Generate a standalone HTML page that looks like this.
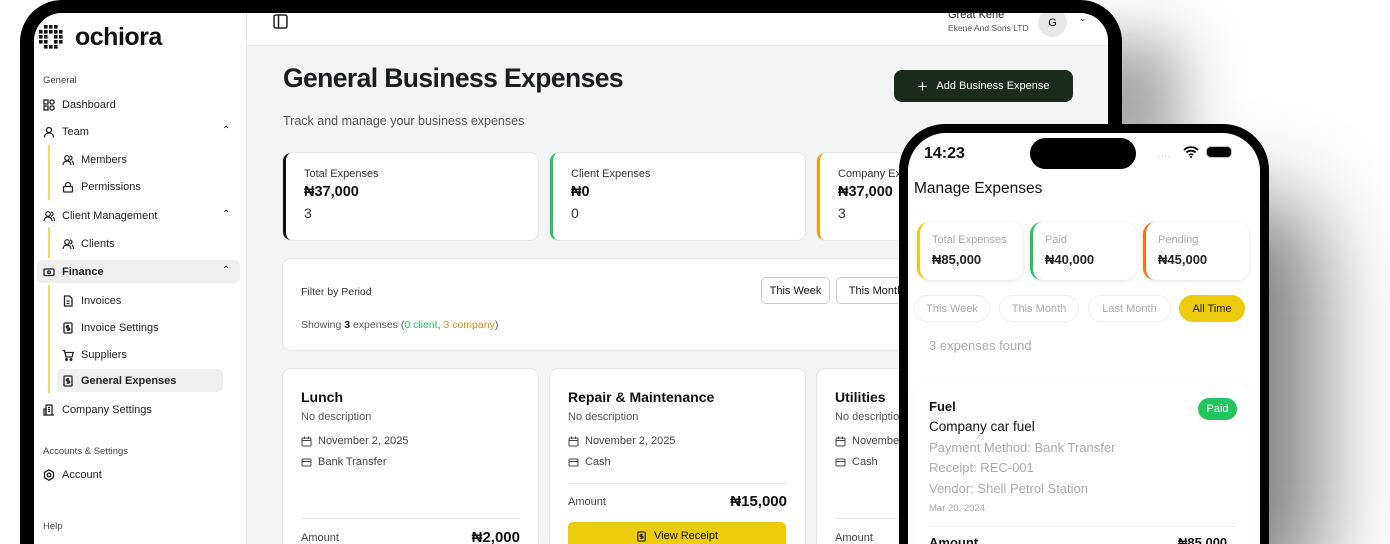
<!DOCTYPE html>
<html style="width:1390px;height:544px;overflow:hidden"><head><meta charset="utf-8"><style>
*{box-sizing:border-box;margin:0;padding:0}
body{width:1390px;height:544px;overflow:hidden;background:#fff;font-family:"Liberation Sans",sans-serif;position:relative;color:#111}
.abs{position:absolute}
.tablet{left:20px;top:0;width:1102px;height:544px;background:#000;border-radius:42px 42px 0 0}
.screen{left:34px;top:13px;width:1074px;height:531px;background:#f3f4f6;border-radius:28px 28px 0 0;overflow:hidden}
.side{left:0;top:0;width:213px;height:531px;background:#fff;border-right:1px solid #e5e5e5}
.hdr{left:213px;top:0;width:861px;height:33px;background:#fff;border-bottom:1px solid #e8e8e8}
.sec{font-size:9.5px;color:#444}
.mi{font-size:11px;color:#222;display:flex;align-items:center;gap:7px;height:22px}
.mi svg{width:12px;height:12px;flex:none}
.card{background:#fff;border-radius:8px;box-shadow:0 0 0 1px #e6e6e6}
.stat{width:255px;height:87px;border-left:3px solid}
.stat .l{position:absolute;left:18px;top:15px;font-size:11px;color:#333}
.stat .v{position:absolute;left:18px;top:31px;font-size:14.5px;font-weight:bold}
.stat .c{position:absolute;left:18px;top:52px;font-size:14px;color:#333}
.ec{width:255px;height:180px}
.ec .t{position:absolute;left:18px;top:20px;font-size:14px;font-weight:bold}
.ec .d{position:absolute;left:18px;top:42px;font-size:11px;color:#555}
.ec .r{position:absolute;left:18px;font-size:11px;color:#444;display:flex;gap:6px;align-items:center}
.ec .hr{position:absolute;left:18px;right:18px;height:1px;background:#e8e8e8}
.phone{left:899px;top:124px;width:370px;height:420px;background:#000;border-radius:46px 46px 0 0}
.pscr{left:9px;top:9px;width:352px;height:411px;background:#fff;border-radius:38px 38px 0 0;overflow:hidden}
.mc{width:106px;height:58px;background:#fff;border-radius:12px;box-shadow:0 1px 4px rgba(0,0,0,.1);border-left:3px solid}
.mc .l{position:absolute;left:12px;top:12px;font-size:11px;color:#aaa}
.mc .v{position:absolute;left:12px;top:30px;font-size:13px;font-weight:bold;color:#222}
.pill{height:27px;border:1px solid #eee;border-radius:14px;font-size:11px;color:#aaa;display:flex;align-items:center;justify-content:center}
.g{font-size:13px;color:#aaa;left:21px}
</style></head><body>
<div class="abs" style="left:1060px;top:40px;width:120px;height:120px;background:rgba(0,0,0,.35);filter:blur(30px)"></div>
<div class="abs" style="left:1080px;top:200px;width:240px;height:400px;background:rgba(0,0,0,.5);filter:blur(45px);border-radius:60px"></div>
<div class="abs tablet"></div>
<div class="abs screen">
 <div class="abs side">
  <svg class="abs" style="left:3px;top:12px" width="28" height="28" viewBox="0 0 28 28" fill="#111">
   <g>
   <rect x="7" y="0" width="3.6" height="3.6"/><rect x="12" y="0" width="3.6" height="3.6"/><rect x="17" y="0" width="3.6" height="3.6"/>
   <rect x="2" y="5" width="3.6" height="3.6"/><rect x="7" y="5" width="3.6" height="3.6"/><rect x="12" y="5" width="3.6" height="3.6"/><rect x="17" y="5" width="3.6" height="3.6"/><rect x="22" y="5" width="3.6" height="3.6"/>
   <rect x="2" y="10" width="3.6" height="3.6"/><rect x="7" y="10" width="3.6" height="3.6"/><rect x="17" y="10" width="3.6" height="3.6"/><rect x="22" y="10" width="3.6" height="3.6"/>
   <rect x="2" y="15" width="3.6" height="3.6"/><rect x="7" y="15" width="3.6" height="3.6"/><rect x="17" y="15" width="3.6" height="3.6"/><rect x="22" y="15" width="3.6" height="3.6"/>
   <rect x="7" y="20" width="3.6" height="3.6"/><rect x="12" y="20" width="3.6" height="3.6"/><rect x="17" y="20" width="3.6" height="3.6"/>
   </g></svg>
  <div class="abs" style="left:41px;top:10px;font-size:25px;font-weight:bold;letter-spacing:-0.5px">ochiora</div>
  <div class="abs sec" style="left:9px;top:62px">General</div>
  <div class="abs mi" style="left:9px;top:81px"><svg viewBox="0 0 12 12" fill="none" stroke="#222" stroke-width="1.3"><rect x="1" y="1" width="4" height="4"/><rect x="7" y="1" width="4" height="4" rx="1.5"/><rect x="1" y="7" width="4" height="4"/><rect x="7" y="7" width="4" height="4" rx="1.5"/></svg>Dashboard</div>
  <div class="abs mi" style="left:9px;top:108px"><svg viewBox="0 0 12 12" fill="none" stroke="#222" stroke-width="1.3"><circle cx="6" cy="4" r="2.5"/><path d="M1.5 11.5c0-3 2-4.5 4.5-4.5s4.5 1.5 4.5 4.5"/></svg>Team</div>
  <div class="abs" style="left:188px;top:112px;font-size:10px">&#8963;</div>
  <div class="abs" style="left:14px;top:132px;width:2px;height:55px;background:#f0d96a"></div>
  <div class="abs mi" style="left:28px;top:136px"><svg viewBox="0 0 12 12" fill="none" stroke="#222" stroke-width="1.2"><circle cx="5" cy="4" r="2.3"/><path d="M1 11c0-2.5 1.8-4 4-4s4 1.5 4 4M8 2a2 2 0 010 4M10 7c1 .6 1.5 2 1.5 4"/></svg>Members</div>
  <div class="abs mi" style="left:28px;top:163px"><svg viewBox="0 0 12 12" fill="none" stroke="#222" stroke-width="1.3"><rect x="1.5" y="5.5" width="9" height="5.5" rx="1"/><path d="M3.5 5.5V4a2.5 2.5 0 015 0v1.5"/></svg>Permissions</div>
  <div class="abs mi" style="left:9px;top:192px"><svg viewBox="0 0 12 12" fill="none" stroke="#222" stroke-width="1.2"><circle cx="5" cy="4" r="2.3"/><path d="M1 11c0-2.5 1.8-4 4-4s4 1.5 4 4M8 2a2 2 0 010 4M10 7c1 .6 1.5 2 1.5 4"/></svg>Client Management</div>
  <div class="abs" style="left:188px;top:196px;font-size:10px">&#8963;</div>
  <div class="abs" style="left:14px;top:214px;width:2px;height:31px;background:#f0d96a"></div>
  <div class="abs mi" style="left:28px;top:220px"><svg viewBox="0 0 12 12" fill="none" stroke="#222" stroke-width="1.2"><circle cx="5" cy="4" r="2.3"/><path d="M1 11c0-2.5 1.8-4 4-4s4 1.5 4 4M8 2a2 2 0 010 4M10 7c1 .6 1.5 2 1.5 4"/></svg>Clients</div>
  <div class="abs" style="left:3px;top:247px;width:203px;height:23px;background:#efefef;border-radius:5px"></div>
  <div class="abs mi" style="left:9px;top:248px;font-weight:bold"><svg viewBox="0 0 12 12" fill="none" stroke="#222" stroke-width="1.3"><rect x="1" y="3" width="10" height="6.5" rx="1"/><circle cx="6" cy="6.2" r="1.3"/></svg>Finance</div>
  <div class="abs" style="left:188px;top:252px;font-size:10px">&#8963;</div>
  <div class="abs" style="left:14px;top:272px;width:2px;height:108px;background:#f0d96a"></div>
  <div class="abs mi" style="left:28px;top:277px"><svg viewBox="0 0 12 12" fill="none" stroke="#222" stroke-width="1.3"><path d="M2.5 1h5l2.5 2.5V11h-7.5z"/><path d="M4.5 6h3M4.5 8.5h3"/></svg>Invoices</div>
  <div class="abs mi" style="left:28px;top:304px"><svg viewBox="0 0 12 12" fill="none" stroke="#222" stroke-width="1.3"><rect x="2" y="1" width="8" height="10" rx="1"/><path d="M7.3 4H5.3a1 1 0 000 2h1.4a1 1 0 010 2H4.7M6 3v6"/></svg>Invoice Settings</div>
  <div class="abs mi" style="left:28px;top:331px"><svg viewBox="0 0 12 12" fill="none" stroke="#222" stroke-width="1.3"><path d="M.5 1.5h2l1.5 6.5h6l1.3-4.5H3.3"/><circle cx="4.5" cy="10.5" r=".8"/><circle cx="9" cy="10.5" r=".8"/></svg>Suppliers</div>
  <div class="abs" style="left:23px;top:356px;width:166px;height:23px;background:#efefef;border-radius:5px"></div>
  <div class="abs mi" style="left:28px;top:357px;font-weight:bold"><svg viewBox="0 0 12 12" fill="none" stroke="#222" stroke-width="1.3"><rect x="2" y="1" width="8" height="10" rx="1"/><path d="M7.3 4H5.3a1 1 0 000 2h1.4a1 1 0 010 2H4.7M6 3v6"/></svg>General Expenses</div>
  <div class="abs mi" style="left:9px;top:386px"><svg viewBox="0 0 12 12" fill="none" stroke="#222" stroke-width="1.3"><rect x="3" y="1" width="6" height="10"/><path d="M1 5h2v6H1zM5 3.5h2M5 5.5h2M5 7.5h2M9 11h2"/></svg>Company Settings</div>
  <div class="abs sec" style="left:9px;top:433px">Accounts &amp; Settings</div>
  <div class="abs mi" style="left:9px;top:451px"><svg viewBox="0 0 12 12" fill="none" stroke="#222" stroke-width="1.3"><path d="M6 .8l4.5 2.6v5.2L6 11.2 1.5 8.6V3.4z"/><circle cx="6" cy="6" r="1.8"/></svg>Account</div>
  <div class="abs sec" style="left:9px;top:508px">Help</div>
 </div>
 <div class="abs hdr">
  <svg class="abs" style="left:26px;top:1px" width="15" height="15" viewBox="0 0 15 15" fill="none" stroke="#222" stroke-width="1.5"><rect x="1" y="1" width="13" height="13" rx="2"/><path d="M5.5 1v13"/></svg>
  <div class="abs" style="left:701px;top:-4px;font-size:11px;color:#222">Great Kene</div>
  <div class="abs" style="left:701px;top:10px;font-size:8.5px;color:#555">Ekene And Sons LTD</div>
  <div class="abs" style="left:791px;top:-5px;width:29px;height:29px;border-radius:50%;background:#e8e8e8;font-size:11px;display:flex;align-items:center;justify-content:center">G</div>
  <div class="abs" style="left:832px;top:0px;font-size:9px;color:#333">&#8964;</div>
 </div>
 <div class="abs" style="left:249px;top:50px;font-size:26.5px;font-weight:bold;letter-spacing:-0.6px;color:#1a1d1f">General Business Expenses</div>
 <div class="abs" style="left:249px;top:101px;font-size:12.5px;color:#555">Track and manage your business expenses</div>
 <div class="abs" style="left:860px;top:57px;width:179px;height:32px;background:#1b2a1b;border-radius:8px;color:#fff;font-size:11px;display:flex;align-items:center;justify-content:center;gap:9px"><span style="font-size:17px;font-weight:300;line-height:1">+</span>Add Business Expense</div>

 <div class="abs card stat" style="left:249px;top:140px;border-color:#111"><div class="l">Total Expenses</div><div class="v">₦37,000</div><div class="c">3</div></div>
 <div class="abs card stat" style="left:516px;top:140px;border-color:#22c55e"><div class="l">Client Expenses</div><div class="v">₦0</div><div class="c">0</div></div>
 <div class="abs card stat" style="left:783px;top:140px;border-color:#f59e0b"><div class="l">Company Expenses</div><div class="v">₦37,000</div><div class="c">3</div></div>

 <div class="abs card" style="left:249px;top:246px;width:790px;height:91px">
  <div class="abs" style="left:18px;top:27px;font-size:10.5px;color:#333">Filter by Period</div>
  <div class="abs" style="left:18px;top:60px;font-size:10.5px;color:#555">Showing <b style="color:#111">3</b> expenses (<span style="color:#22c55e">0 client</span>, <span style="color:#e08a1a">3 company</span>)</div>
  <div class="abs" style="left:478px;top:18px;width:69px;height:27px;border:1px solid #ccc;border-radius:5px;font-size:11px;display:flex;align-items:center;justify-content:center">This Week</div>
  <div class="abs" style="left:553px;top:18px;width:80px;height:27px;border:1px solid #ccc;border-radius:5px;font-size:11px;display:flex;align-items:center;justify-content:center">This Month</div>
 </div>

 <div class="abs card ec" style="left:249px;top:356px">
  <div class="t">Lunch</div><div class="d">No description</div>
  <div class="r" style="top:66px"><svg width="11" height="11" viewBox="0 0 11 11" fill="none" stroke="#444"><rect x="1" y="2" width="9" height="8" rx="1"/><path d="M1 4.5h9M3.5.5v2.5M7.5.5v2.5"/></svg>November 2, 2025</div>
  <div class="r" style="top:87px"><svg width="11" height="11" viewBox="0 0 11 11" fill="none" stroke="#444"><rect x="1" y="2" width="9" height="7" rx="1"/><path d="M1 4.5h9"/></svg>Bank Transfer</div>
  <div class="hr" style="top:149px"></div>
  <div class="abs" style="left:18px;top:163px;font-size:11px;color:#444">Amount</div>
  <div class="abs" style="right:18px;top:160px;font-size:15px;font-weight:bold">₦2,000</div>
 </div>
 <div class="abs card ec" style="left:516px;top:356px">
  <div class="t">Repair &amp; Maintenance</div><div class="d">No description</div>
  <div class="r" style="top:66px"><svg width="11" height="11" viewBox="0 0 11 11" fill="none" stroke="#444"><rect x="1" y="2" width="9" height="8" rx="1"/><path d="M1 4.5h9M3.5.5v2.5M7.5.5v2.5"/></svg>November 2, 2025</div>
  <div class="r" style="top:87px"><svg width="11" height="11" viewBox="0 0 11 11" fill="none" stroke="#444"><rect x="1" y="2" width="9" height="7" rx="1"/><path d="M1 4.5h9"/></svg>Cash</div>
  <div class="hr" style="top:114px"></div>
  <div class="abs" style="left:18px;top:127px;font-size:11px;color:#444">Amount</div>
  <div class="abs" style="right:18px;top:124px;font-size:15px;font-weight:bold">₦15,000</div>
  <div class="abs" style="left:18px;top:153px;width:218px;height:28px;background:#eccb0c;border-radius:5px;font-size:11px;display:flex;align-items:center;justify-content:center;gap:7px"><svg width="11" height="11" viewBox="0 0 12 12" fill="none" stroke="#222" stroke-width="1.3"><rect x="2" y="1" width="8" height="10" rx="1"/><path d="M7.3 4H5.3a1 1 0 000 2h1.4a1 1 0 010 2H4.7M6 3v6"/></svg>View Receipt</div>
 </div>
 <div class="abs card ec" style="left:783px;top:356px">
  <div class="t">Utilities</div><div class="d">No description</div>
  <div class="r" style="top:66px"><svg width="11" height="11" viewBox="0 0 11 11" fill="none" stroke="#444"><rect x="1" y="2" width="9" height="8" rx="1"/><path d="M1 4.5h9M3.5.5v2.5M7.5.5v2.5"/></svg>November 2, 2025</div>
  <div class="r" style="top:87px"><svg width="11" height="11" viewBox="0 0 11 11" fill="none" stroke="#444"><rect x="1" y="2" width="9" height="7" rx="1"/><path d="M1 4.5h9"/></svg>Cash</div>
  <div class="hr" style="top:149px"></div>
  <div class="abs" style="left:18px;top:163px;font-size:11px;color:#444">Amount</div>
 </div>
</div>

<div class="abs phone">
 <div class="abs pscr">
  <div class="abs" style="left:16px;top:12px;font-size:16px;font-weight:bold;color:#111">14:23</div>
  <div class="abs" style="left:122px;top:5px;width:106px;height:31px;background:#000;border-radius:16px"></div>
  <div class="abs" style="left:250px;top:17px;font-size:8px;color:#bbb;letter-spacing:1px">....</div>
  <svg class="abs" style="left:275px;top:13px" width="16" height="12" viewBox="0 0 16 12"><path d="M1 4a10 10 0 0114 0M3.5 6.5a6.5 6.5 0 019 0M6 9a3 3 0 014 0" fill="none" stroke="#000" stroke-width="1.8"/><circle cx="8" cy="11" r="1" fill="#000"/></svg>
  <div class="abs" style="left:299px;top:14px;width:24px;height:10px;border-radius:4px;background:#000;box-shadow:0 0 0 1px #bbb"></div>
  <div class="abs" style="left:6px;top:47px;font-size:15.5px;color:#111;font-weight:500">Manage Expenses</div>
  <div class="abs mc" style="left:9px;top:89px;border-color:#eccb0c"><div class="l">Total Expenses</div><div class="v">₦85,000</div></div>
  <div class="abs mc" style="left:122px;top:89px;border-color:#22c55e"><div class="l">Paid</div><div class="v">₦40,000</div></div>
  <div class="abs mc" style="left:235px;top:89px;border-color:#f97316"><div class="l">Pending</div><div class="v">₦45,000</div></div>
  <div class="abs pill" style="left:6px;top:162px;width:76px">This Week</div>
  <div class="abs pill" style="left:91px;top:162px;width:80px">This Month</div>
  <div class="abs pill" style="left:180px;top:162px;width:83px">Last Month</div>
  <div class="abs pill" style="left:271px;top:162px;width:66px;background:#eccb0c;border-color:#eccb0c;color:#222">All Time</div>
  <div class="abs g" style="top:205px">3 expenses found</div>
  <div class="abs" style="left:6px;top:250px;width:337px;height:200px;border-radius:12px;box-shadow:0 0 4px rgba(0,0,0,.06)"></div>
  <div class="abs" style="left:21px;top:266px;font-size:13px;font-weight:bold">Fuel</div>
  <div class="abs" style="left:290px;top:265px;width:39px;height:22px;border-radius:11px;background:#22c55e;color:#fff;font-size:11px;display:flex;align-items:center;justify-content:center">Paid</div>
  <div class="abs" style="left:21px;top:286px;font-size:13.5px;color:#111">Company car fuel</div>
  <div class="abs g" style="top:307px">Payment Method: Bank Transfer</div>
  <div class="abs g" style="top:327px">Receipt: REC-001</div>
  <div class="abs g" style="top:348px">Vendor: Shell Petrol Station</div>
  <div class="abs" style="left:21px;top:370px;font-size:9.5px;color:#aaa">Mar 20, 2024</div>
  <div class="abs" style="left:21px;top:393px;width:308px;height:1px;background:#eee"></div>
  <div class="abs" style="left:21px;top:402px;font-size:13px;font-weight:bold">Amount</div>
  <div class="abs" style="left:270px;top:402px;font-size:13px;font-weight:bold">₦85,000</div>
 </div>
</div>
</body></html>
